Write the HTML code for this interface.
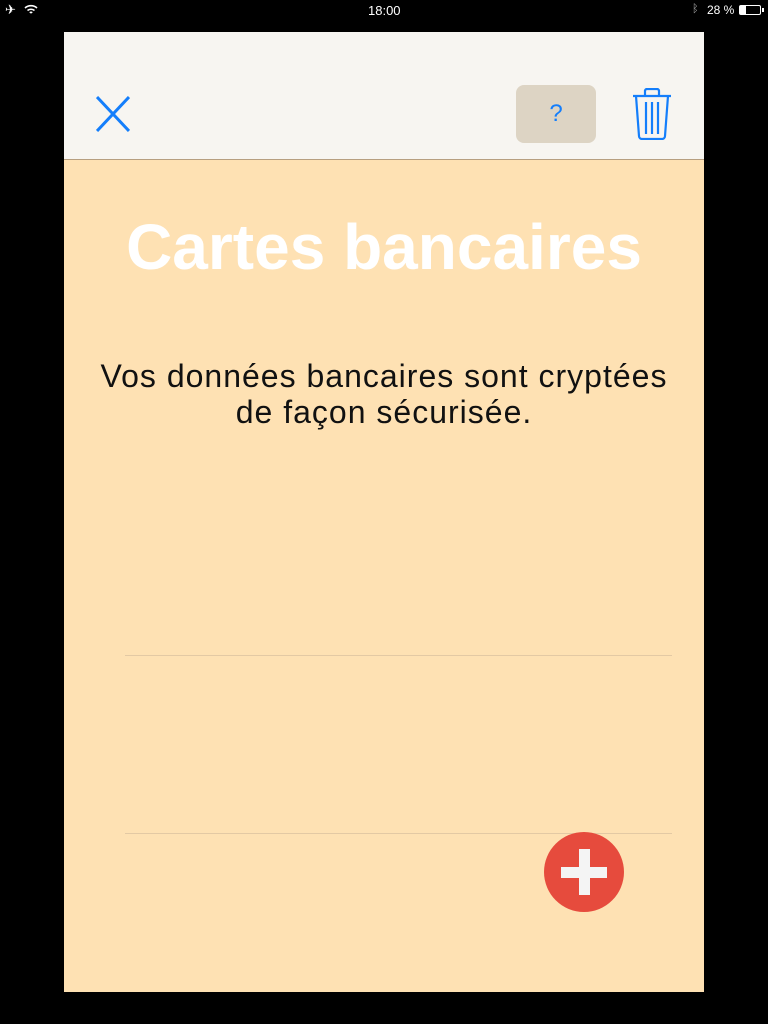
<!DOCTYPE html>
<html><head><meta charset="utf-8"><style>
*{margin:0;padding:0;box-sizing:border-box}
body{width:768px;height:1024px;background:#000;position:relative;overflow:hidden;font-family:"Liberation Sans",sans-serif}
.sb{position:absolute;top:0;left:0;width:768px;height:20px;color:#fff;font-size:12px}
.panel{position:absolute;left:64px;top:32px;width:640px;height:960px;background:#fee1b3}
.hdr{position:absolute;left:0;top:0;width:640px;height:128px;background:#f7f5f1;border-bottom:1px solid #b79f80}
.q{position:absolute;left:452px;top:53px;width:80px;height:58px;background:#ddd4c4;border-radius:8px;color:#147efb;font-size:24px;text-align:center;line-height:58px}
h1{position:absolute;top:178px;left:0;width:640px;text-align:center;color:#fff;font-size:64px;font-weight:bold}
p{position:absolute;top:326px;left:0;width:640px;text-align:center;font-size:32px;letter-spacing:1px;line-height:36px;color:#111}
.ln{position:absolute;left:61px;width:547px;height:1px;background:#e3c9a4}
.plus{position:absolute;left:480px;top:800px;width:80px;height:80px;border-radius:50%;background:#e64b3d}
.plus:before{content:"";position:absolute;left:17px;top:35px;width:46px;height:11px;background:#f4f4f4}
.plus:after{content:"";position:absolute;left:35px;top:17px;width:11px;height:46px;background:#f4f4f4}
</style></head><body>
<div class="sb">
<span style="position:absolute;left:5px;top:2px;font-size:13px">✈</span>
<svg style="position:absolute;left:24px;top:4px" width="14" height="11" viewBox="0 0 14 11"><path d="M1 4a9 9 0 0 1 12 0M3.5 6.5a5.5 5.5 0 0 1 7 0M5.8 8.8a2 2 0 0 1 2.4 0" stroke="#fff" stroke-width="1.6" fill="none"/></svg>
<span style="position:absolute;left:368px;top:3px;font-size:13px">18:00</span>
<span style="position:absolute;left:692px;top:3px;font-size:11px;color:#aaa">ᛒ</span>
<span style="position:absolute;left:707px;top:3px">28 %</span>
<div style="position:absolute;left:739px;top:5px;width:22px;height:10px;border:1px solid #fff;border-radius:2px"><div style="width:6px;height:8px;background:#fff"></div></div>
<div style="position:absolute;left:762px;top:8px;width:2px;height:4px;background:#fff"></div>
</div>
<div class="panel">
<div class="hdr">
<svg style="position:absolute;left:32px;top:64px" width="34" height="36" viewBox="0 0 34 36"><path d="M1 1L33 35M33 1L1 35" stroke="#147efb" stroke-width="3" fill="none"/></svg>
<div class="q">?</div>
<svg style="position:absolute;left:568px;top:56px" width="40" height="52" viewBox="0 0 40 52"><path d="M1 8H39M13 8V3a2 2 0 0 1 2-2h10a2 2 0 0 1 2 2v5M4 8l3 40a3 3 0 0 0 3 3h20a3 3 0 0 0 3-3l3-40M14 14v32M20 14v32M26 14v32" stroke="#147efb" stroke-width="2.2" fill="none"/></svg>
</div>
<h1>Cartes bancaires</h1>
<p>Vos données bancaires sont cryptées<br>de façon sécurisée.</p>
<div class="ln" style="top:623px"></div>
<div class="ln" style="top:801px"></div>
<div class="plus"></div>
</div>
</body></html>
